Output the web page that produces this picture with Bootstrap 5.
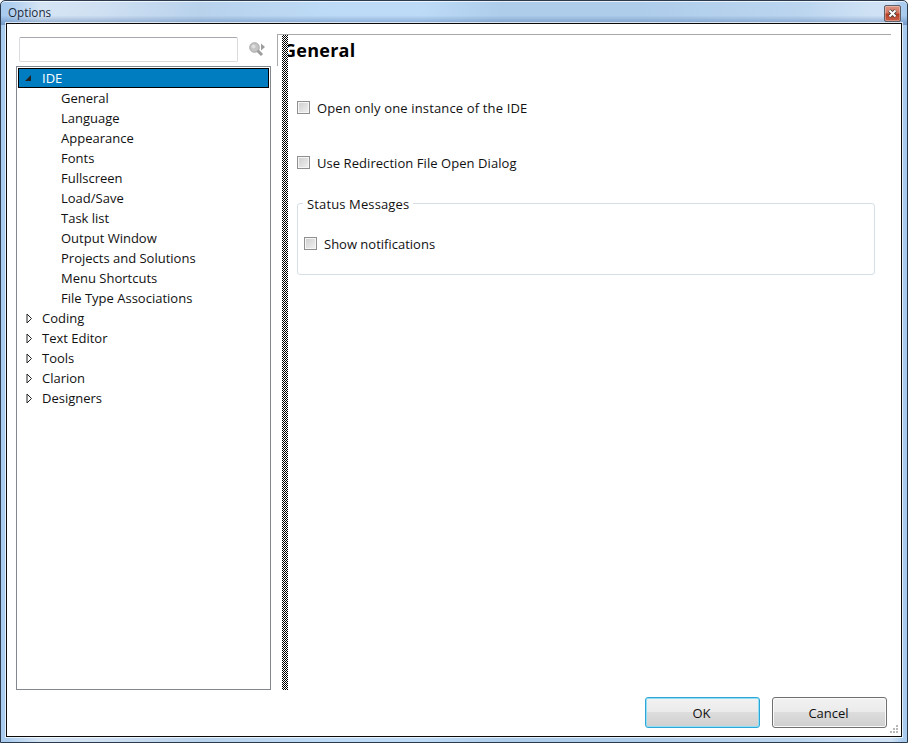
<!DOCTYPE html>
<html lang="en">
<head>
<meta charset="utf-8">
<title>Options</title>
<link href="https://cdn.jsdelivr.net/npm/bootstrap@5.3.0/dist/css/bootstrap.min.css" rel="stylesheet">
<style>
html,body{height:100%;margin:0;background:#fff}
body{font-family:"Open Sans","Noto Sans",sans-serif;font-size:13px;color:#111;line-height:20px}
.win-frame{width:908px;height:743px;border:1px solid #2b3a4c;border-radius:5px 5px 0 0;padding:0 5px 5px;box-shadow:inset 0 1px 0 rgba(255,255,255,.7);
 background:linear-gradient(180deg,rgba(255,255,255,0) 60%,rgba(60,100,160,.5) 100%) 0 0/100% 24px no-repeat,
 linear-gradient(90deg,#a9cbee 0,#a9cbee 5px,#d6e5f4 40px,#cfe0f2 100px,#b8d2ec 200px,#bddbf7 340px,#bddbf7 420px,#aecdea 500px,#aecdea 640px,#bbd5ef 800px,#cfe2f5 870px,#cfe2f5 890px,#a9cbee 902px,#a9cbee 100%);}
.win-title{height:22px;padding-left:2px;color:#1c2a3a;line-height:23px;font-size:11.7px}
.win-close{width:17px;height:17px;margin-top:4px;margin-right:1px;border:1px solid #5d5e66;border-radius:2px;background:linear-gradient(180deg,#dc9483 0,#d3745f 48%,#b53a20 52%,#c9604a 100%);box-shadow:inset 0 0 0 1px rgba(255,255,255,.3)}
.win-client{height:714px;border:1px solid #0a0a0a;background:#fff;padding:10px 10px 6px 9px;box-shadow:0 0 0 1px rgba(255,255,255,.7)}
.left-pane{width:255px;padding-top:3px}
.search-input{width:219px;height:25px;margin-left:3px;border:1px solid #d9dbde;border-top-color:#a5a8ae;border-radius:2px;background:#fff}
.search-ico{margin-left:11px}
.tree-box{margin-top:4px;height:624px;border:1px solid #828790;padding:1px 1px 0 1px}
.tree-row{height:20px;white-space:nowrap;line-height:19px}
.tree-row svg{flex:none}
.tw{width:24px;padding-left:8px}
.tree-row.sel{background:#007dc1;border:1px solid #000;color:#fff;line-height:18px}
.tree-row.sel .tw{padding-left:5px;width:23px}
.leaf{padding-left:43px;line-height:21px}
.right-pane{margin-left:6px;flex:1;position:relative;border-top:1px solid #a9a9a9;height:656px}
.right-pane::before{content:"";position:absolute;left:0;top:0;height:31px;border-left:1px solid #a9a9a9}
.split-grip{position:absolute;left:5px;top:0;bottom:0;width:6px;background:conic-gradient(#000 25%,#fff 0 50%,#000 0 75%,#fff 0) 0 0/2px 2px}
.pane-head{font-size:18px;font-weight:700;line-height:24px;margin:3px 0 0 6px;color:#000;letter-spacing:.25px}
.opt-line{display:flex;align-items:center;gap:7px}
.box-check{width:13px;height:13px;flex:none;margin-bottom:2px;border:1px solid #8e8f8f;background:linear-gradient(135deg,#cdcdcd,#f2f2f2);box-shadow:inset 0 0 0 1px #f6f6f6}
.opt-a{margin:36px 0 0 20px;letter-spacing:.15px}
.opt-b{margin:35px 0 0 20px;letter-spacing:.06px}
.group-wrap{position:relative;margin:30px 16px 0 20px;height:72px;border:1px solid #d5dfe5;border-radius:3px;padding:30px 6px 0}
.group-cap{position:absolute;left:5px;top:-10px;background:#fff;padding:0 4px;letter-spacing:.13px}
.foot-bar{margin-top:7px;padding-right:4px;gap:12px;position:relative}
.dlg-btn{width:115px;height:31px;padding:1px 2px 0 0;border:1px solid #707070;border-radius:3px;background:linear-gradient(180deg,#f2f2f2 0,#ebebeb 48%,#dddddd 50%,#cfcfcf 100%);color:#111;font-size:13px;line-height:28px;box-shadow:inset 0 0 0 1px #fafafa}
.dlg-btn.is-default{border-color:#2ea6d6;box-shadow:inset 0 0 0 1px #8fe0f6}
.grip-dots{position:absolute;right:-7px;bottom:-5px}
</style>
</head>
<body>
<div class="win-frame">
  <div class="win-title d-flex justify-content-between">
    <span>Options</span>
    <div class="win-close d-flex align-items-center justify-content-center">
      <svg width="11" height="9" viewBox="0 0 11 9"><path d="M2.5 1.5 8.5 7.5M8.5 1.5 2.5 7.5" stroke="#3a3a3a" stroke-width="3.6"/><path d="M2.5 1.5 8.5 7.5M8.5 1.5 2.5 7.5" stroke="#fff" stroke-width="2"/></svg>
    </div>
  </div>
  <div class="win-client d-flex flex-column">
    <div class="d-flex">
      <div class="left-pane">
        <div class="d-flex align-items-center">
          <div class="search-input"></div>
          <svg class="search-ico" width="17" height="16" viewBox="0 0 17 16"><circle cx="5.5" cy="5.5" r="4.8" fill="#c4c4c4" stroke="#a8a8a8"/><circle cx="4.5" cy="4.5" r="2" fill="#dedede"/><path d="M8.5 8.5l4.5 4.5" stroke="#9d9d9d" stroke-width="3"/><path d="M12 1.5l4 3.5-4 3.5z" fill="#9d9d9d"/></svg>
        </div>
        <div class="tree-box">
          <div class="tree-row sel d-flex align-items-center"><span class="tw"><svg width="8" height="8" viewBox="0 0 8 8" class="d-block"><path d="M7 1v6H1z" fill="#222"/></svg></span>IDE</div>
          <div class="tree-row leaf">General</div>
          <div class="tree-row leaf">Language</div>
          <div class="tree-row leaf">Appearance</div>
          <div class="tree-row leaf">Fonts</div>
          <div class="tree-row leaf">Fullscreen</div>
          <div class="tree-row leaf">Load/Save</div>
          <div class="tree-row leaf">Task list</div>
          <div class="tree-row leaf">Output Window</div>
          <div class="tree-row leaf">Projects and Solutions</div>
          <div class="tree-row leaf">Menu Shortcuts</div>
          <div class="tree-row leaf">File Type Associations</div>
          <div class="tree-row d-flex align-items-center"><span class="tw"><svg width="7" height="11" viewBox="0 0 7 11" class="d-block"><path d="M1 1l4.5 4.5L1 10z" fill="#fff" stroke="#222"/></svg></span>Coding</div>
          <div class="tree-row d-flex align-items-center"><span class="tw"><svg width="7" height="11" viewBox="0 0 7 11" class="d-block"><path d="M1 1l4.5 4.5L1 10z" fill="#fff" stroke="#222"/></svg></span>Text Editor</div>
          <div class="tree-row d-flex align-items-center"><span class="tw"><svg width="7" height="11" viewBox="0 0 7 11" class="d-block"><path d="M1 1l4.5 4.5L1 10z" fill="#fff" stroke="#222"/></svg></span>Tools</div>
          <div class="tree-row d-flex align-items-center"><span class="tw"><svg width="7" height="11" viewBox="0 0 7 11" class="d-block"><path d="M1 1l4.5 4.5L1 10z" fill="#fff" stroke="#222"/></svg></span>Clarion</div>
          <div class="tree-row d-flex align-items-center"><span class="tw"><svg width="7" height="11" viewBox="0 0 7 11" class="d-block"><path d="M1 1l4.5 4.5L1 10z" fill="#fff" stroke="#222"/></svg></span>Designers</div>
        </div>
      </div>
      <div class="right-pane">
        <div class="split-grip"></div>
        <div class="pane-head">General</div>
        <label class="opt-line opt-a"><span class="box-check"></span>Open only one instance of the IDE</label>
        <label class="opt-line opt-b"><span class="box-check"></span>Use Redirection File Open Dialog</label>
        <div class="group-wrap">
          <span class="group-cap">Status Messages</span>
          <label class="opt-line"><span class="box-check"></span>Show notifications</label>
        </div>
      </div>
    </div>
    <div class="foot-bar d-flex justify-content-end">
      <button type="button" class="btn dlg-btn is-default">OK</button>
      <button type="button" class="btn dlg-btn">Cancel</button>
      <svg class="grip-dots" width="8" height="8" viewBox="0 0 8 8"><g fill="#b8b8b8"><rect x="6" y="0" width="2" height="2"/><rect x="3" y="3" width="2" height="2"/><rect x="6" y="3" width="2" height="2"/><rect x="0" y="6" width="2" height="2"/><rect x="3" y="6" width="2" height="2"/><rect x="6" y="6" width="2" height="2"/></g></svg>
    </div>
  </div>
</div>
</body>
</html>
